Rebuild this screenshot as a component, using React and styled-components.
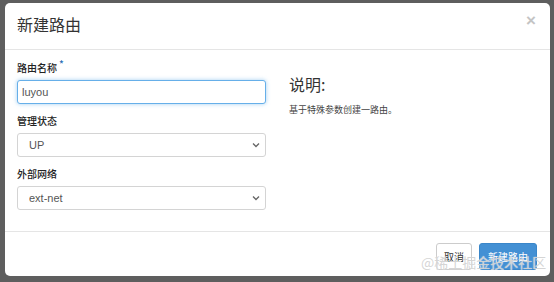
import React from 'react'
import styled, { createGlobalStyle } from 'styled-components'

const GlobalStyle = createGlobalStyle`
  html, body { margin: 0; padding: 0; }
  body {
    width: 554px;
    height: 282px;
    background: #5e5e5e;
    font-family: "Liberation Sans", "Noto Sans CJK SC", sans-serif;
    overflow: hidden;
  }
`

const Page = styled.div`
  padding: 3px 4px 0 5px;
  position: relative;
`

const Modal = styled.div`
  width: 545px;
  height: 273px;
  background: #fff;
  border-radius: 5px;
  display: flex;
  flex-direction: column;
  box-sizing: border-box;
`

const Header = styled.div`
  height: 47px;
  box-sizing: border-box;
  border-bottom: 1px solid #e5e5e5;
  display: flex;
  align-items: center;
  justify-content: space-between;
  padding: 0 14px 4px 12px;
`

const Title = styled.h4`
  margin: 0;
  font-size: 16px;
  font-weight: normal;
  color: #333;
  font-family: "Noto Sans CJK SC", sans-serif;
`

const Close = styled.span`
  font-size: 17px;
  font-weight: bold;
  color: #c4c4c4;
  line-height: 1;
  margin-bottom: 8px;
`

const Body = styled.div`
  flex: 1;
  display: flex;
  padding: 11px 12px 0 12px;
  border-bottom: 1px solid #e5e5e5;
`

const LeftCol = styled.div`
  width: 249px;
  display: flex;
  flex-direction: column;
`

const RightCol = styled.div`
  padding-left: 23px;
  padding-top: 11px;
`

const Group = styled.div`
  margin-bottom: 10px;
`

const Label = styled.label`
  display: block;
  font-size: 10px;
  font-weight: 500;
  color: #222;
  height: 14px;
  line-height: 14px;
  margin-bottom: 5px;
  font-family: "Noto Sans CJK SC", sans-serif;
`

const Star = styled.sup`
  color: #2a6fb5;
  font-size: 10px;
  margin-left: 2px;
  vertical-align: 4px;
  line-height: 0;
`

const Input = styled.input`
  width: 100%;
  height: 24px;
  box-sizing: border-box;
  border: 1px solid ${p => (p.$focus ? '#66afe9' : '#d4d4d4')};
  box-shadow: ${p => (p.$focus ? '0 0 4px rgba(102,175,233,.6)' : 'none')};
  border-radius: 3px;
  padding: 0 4px;
  font-size: 11px;
  color: #555;
  font-family: "Liberation Sans", sans-serif;
  outline: none;
`

const SelectWrap = styled.div`
  position: relative;
`

const Select = styled.select`
  width: 100%;
  height: 24px;
  box-sizing: border-box;
  border: 1px solid #d4d4d4;
  border-radius: 3px;
  padding: 0 11px;
  font-size: 11px;
  color: #555;
  background: #fff;
  appearance: none;
  font-family: "Liberation Sans", sans-serif;
  outline: none;
`

const Chevron = styled.svg`
  position: absolute;
  right: 6px;
  top: 9px;
  pointer-events: none;
`

const Heading = styled.h3`
  margin: 0 0 7px;
  font-size: 16px;
  font-weight: normal;
  color: #333;
  font-family: "Noto Sans CJK SC", sans-serif;
`

const Desc = styled.p`
  margin: 0;
  font-size: 9px;
  color: #444;
  font-family: "Noto Sans CJK SC", sans-serif;
`

const Footer = styled.div`
  height: 44px;
  display: flex;
  justify-content: flex-end;
  align-items: center;
  gap: 7px;
  padding: 0 13px 0 0;
`

const Button = styled.button`
  height: 27px;
  padding: 0 ${p => (p.$primary ? '8px' : '7px')};
  font-size: 10px;
  line-height: 1;
  display: flex;
  align-items: center;
  border-radius: 3px;
  border: 1px solid ${p => (p.$primary ? '#3a86c9' : '#ccc')};
  background: ${p => (p.$primary ? '#4390d4' : '#fff')};
  color: ${p => (p.$primary ? '#fff' : '#333')};
  font-family: "Noto Sans CJK SC", sans-serif;
  margin-top: 5px;
`

const Watermark = styled.div`
  position: absolute;
  left: 421px;
  top: 252px;
  font-size: 14px;
  color: rgba(200, 200, 200, 0.75);
  text-shadow: 0 0 1px #fff;
  font-family: "Noto Sans CJK SC", sans-serif;
  pointer-events: none;
`

function Arrow() {
  return (
    <Chevron width="8" height="6" viewBox="0 0 8 6">
      <path d="M1 1.5 L4 4.5 L7 1.5" fill="none" stroke="#666" strokeWidth="1.3" />
    </Chevron>
  )
}

export default function App() {
  return (
    <Page>
      <GlobalStyle />
      <Modal>
        <Header>
          <Title>新建路由</Title>
          <Close>×</Close>
        </Header>
        <Body>
          <LeftCol>
            <Group>
              <Label>路由名称<Star>*</Star></Label>
              <Input $focus defaultValue="luyou" />
            </Group>
            <Group>
              <Label>管理状态</Label>
              <SelectWrap>
                <Select defaultValue="UP">
                  <option>UP</option>
                  <option>DOWN</option>
                </Select>
                <Arrow />
              </SelectWrap>
            </Group>
            <Group>
              <Label>外部网络</Label>
              <SelectWrap>
                <Select defaultValue="ext-net">
                  <option>ext-net</option>
                </Select>
                <Arrow />
              </SelectWrap>
            </Group>
          </LeftCol>
          <RightCol>
            <Heading>说明:</Heading>
            <Desc>基于特殊参数创建一路由。</Desc>
          </RightCol>
        </Body>
        <Footer>
          <Button>取消</Button>
          <Button $primary>新建路由</Button>
        </Footer>
      </Modal>
      <Watermark>@稀土掘金技术社区</Watermark>
    </Page>
  )
}
